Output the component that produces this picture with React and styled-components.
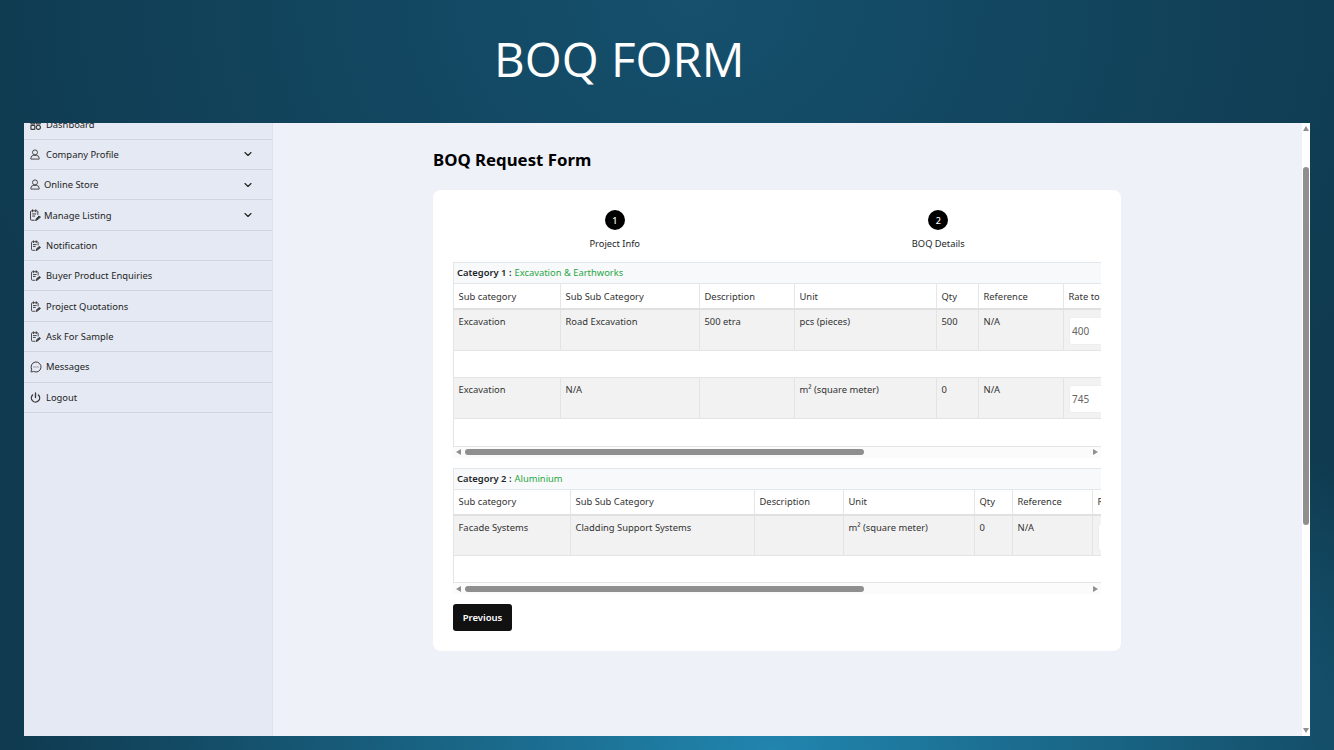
import React from "react"
import styled, { createGlobalStyle } from "styled-components"
import { ChevronDown, MessageCircleMore, Power } from "lucide-react"

const GlobalStyle = createGlobalStyle`
  html, body {
    margin: 0;
    height: 100%;
    overflow: hidden;
  }
  body {
    font-family: "Noto Sans", "Open Sans", sans-serif;
    color: #212529;
  }
  * {
    box-sizing: border-box;
  }
`

const Slide = styled.div`
  width: 1334px;
  height: 750px;
  display: flex;
  flex-direction: column;
  padding: 0 24px 14px;
  background:
    radial-gradient(ellipse 760px 420px at 58% 100%, #2185ae 0%, rgba(33, 133, 174, 0) 100%),
    radial-gradient(ellipse 760px 620px at 52% 0%, #15506d 0%, rgba(21, 80, 109, 0) 100%),
    #0f3a4f;
`

const SlideTitle = styled.h1`
  height: 123px;
  margin: 0;
  padding: 28px 0 0 470px;
  font-family: "Open Sans", sans-serif;
  font-size: 47.5px;
  line-height: 62px;
  font-weight: 400;
  color: #fff;
`

const Window = styled.div`
  flex: 1;
  min-height: 0;
  display: flex;
  background: #eef1f8;
  overflow: hidden;
`

const Sidebar = styled.nav`
  width: 249px;
  flex-shrink: 0;
  background: #e5e9f3;
  border-right: 1px solid #dde2ec;
  overflow: hidden;
`

const MenuList = styled.div`
  margin-top: -13.6px;
`

const MenuRow = styled.div`
  height: 30.35px;
  display: flex;
  align-items: center;
  padding: 0 18.5px 0 6px;
  border-bottom: 1px solid #cfd4de;
  font-size: 9.4px;
  color: #1e1e1e;
`

const MenuIcon = styled.span`
  width: 14px;
  height: 14px;
  display: flex;
  align-items: center;
  flex-shrink: 0;
  color: #3a3a3a;
`

const MenuLabel = styled.span`
  flex: 1;
  margin-left: ${(p) => (p.$tight ? 0 : 2)}px;
`

const SheetSvg = styled.svg`
  margin-left: ${(p) => (p.$big ? 0 : 1)}px;
`

const Main = styled.main`
  flex: 1;
  min-width: 0;
  padding: 25px 0 0 160px;
`

const Heading = styled.h2`
  margin: 0 0 19px;
  font-size: 16.8px;
  line-height: 23px;
  font-weight: 700;
  color: #000;
`

const Card = styled.div`
  width: 688px;
  height: 461px;
  padding: 20px;
  background: #fff;
  border-radius: 8px;
`

const Stepper = styled.div`
  height: 52px;
  display: flex;
`

const Step = styled.div`
  width: 323.5px;
  display: flex;
  flex-direction: column;
  align-items: center;
`

const StepDot = styled.div`
  width: 20px;
  height: 20px;
  border-radius: 50%;
  background: #000;
  color: #fff;
  font-size: 9px;
  font-weight: 500;
  display: flex;
  align-items: center;
  justify-content: center;
`

const StepLabel = styled.div`
  margin-top: 7px;
  font-size: 9.3px;
  line-height: 14px;
  color: #212529;
`

const CategoryBar = styled.div`
  height: 22px;
  display: flex;
  align-items: center;
  padding: 0 0 1px 3px;
  background: #f8f9fa;
  border: 1px solid #e4e7ea;
  border-right: 0;
  font-size: 9.4px;
  font-weight: 600;
  color: #212529;
`

const CategoryName = styled.span`
  margin-left: 3px;
  font-weight: 400;
  color: #28a745;
`

const TableScroll = styled.div`
  width: 648px;
  overflow: hidden;
`

const Table = styled.table`
  table-layout: fixed;
  width: ${(p) => p.$width}px;
  border-collapse: collapse;
  font-size: 9.4px;
  color: #333;
`

const HeadCell = styled.th`
  height: 25px;
  padding: 0 4.5px;
  text-align: left;
  font-weight: 400;
  background: #fff;
  border: 1px solid #e4e6e8;
  border-top: 0;
  border-bottom: 2px solid #dee0e2;
`

const Cell = styled.td`
  height: 41px;
  padding: 5px 4.5px 0;
  vertical-align: top;
  background: #f2f2f2;
  border: 1px solid #e2e4e6;
  border-top: 0;
`

const RateCell = styled(Cell)`
  padding: 7px 0 0 5px;
`

const Spacer = styled.td`
  height: ${(p) => p.$h}px;
  background: #fff;
  border-left: 1px solid #e2e4e6;
  border-bottom: 1px solid #e2e4e6;
`

const RateBox = styled.div`
  width: 76px;
  height: 28px;
  padding-left: 2px;
  display: flex;
  align-items: center;
  background: #fff;
  border: 1px solid #eeeeee;
  border-radius: 3px;
  font-size: 10px;
  color: #666;
`

const HScroll = styled.div`
  width: 648px;
  height: 11px;
  display: flex;
  align-items: center;
  background: #fbfbfb;
  color: #8f8f8f;
  padding: 0 3px;
`

const HThumb = styled.div`
  width: 399px;
  height: 6px;
  margin-left: 4px;
  border-radius: 3px;
  background: #8f8f8f;
`

const Filler = styled.div`
  flex: 1;
`

const TableBlock = styled.section`
  margin-bottom: 10px;
`

const PrevButton = styled.button`
  width: 59px;
  height: 27px;
  padding: 0;
  border: 0;
  border-radius: 3px;
  background: #111;
  color: #fff;
  font-family: inherit;
  font-size: 9.5px;
  font-weight: 600;
`

const VScroll = styled.div`
  width: 8px;
  flex-shrink: 0;
  display: flex;
  flex-direction: column;
  align-items: center;
  background: #fff;
  color: #8f8f8f;
  padding: 3px 0;
`

const VThumb = styled.div`
  width: 6px;
  height: 358px;
  margin-top: 36px;
  border-radius: 3px;
  background: #8f8f8f;
`

function SheetIcon({ big }) {
  return (
    <SheetSvg $big={big} width={big ? 11 : 10} height={big ? 12 : 11} viewBox="3 1 21 22" fill="none" stroke="currentColor" strokeWidth="1.9" strokeLinecap="round" strokeLinejoin="round">
      <path d="M18 11V6a2 2 0 0 0-2-2H6a2 2 0 0 0-2 2v14a2 2 0 0 0 2 2h5" />
      <path d="M8 2v4M14 2v4M8 10h6M8 14h4" />
      <path d="M14 22l1-3 5-5 3 2-6 5z" fill="currentColor" />
    </SheetSvg>
  )
}

function PersonIcon() {
  return (
    <svg width="10" height="11" viewBox="0 0 24 26" fill="none" stroke="currentColor" strokeWidth="2.2" strokeLinejoin="round">
      <circle cx="12" cy="8" r="6" />
      <path d="M9 15h6a7 7 0 0 1 7 7v2H2v-2a7 7 0 0 1 7-7z" />
    </svg>
  )
}

function DashIcon() {
  return (
    <svg width="11" height="11" viewBox="0 0 24 24" fill="none" stroke="currentColor" strokeWidth="2.6">
      <rect x="2" y="2" width="8.5" height="8.5" rx="1.5" />
      <rect x="14" y="2" width="8.5" height="8.5" rx="1.5" />
      <rect x="2" y="14" width="8.5" height="8.5" rx="1.5" />
      <circle cx="18.2" cy="18.2" r="4.6" />
    </svg>
  )
}

function Triangle({ dir }) {
  const points = {
    left: "5,0 5,6 0,3",
    right: "0,0 0,6 5,3",
    up: "0,5 6,5 3,0",
    down: "0,0 6,0 3,5",
  }
  const wide = dir === "up" || dir === "down"
  return (
    <svg width={wide ? 6 : 5} height={wide ? 5 : 6} viewBox={wide ? "0 0 6 5" : "0 0 5 6"} fill="currentColor">
      <polygon points={points[dir]} />
    </svg>
  )
}

const menu = [
  { label: "Dashboard", icon: <DashIcon /> },
  { label: "Company Profile", icon: <PersonIcon />, more: true },
  { label: "Online Store", icon: <PersonIcon />, more: true, tight: true },
  { label: "Manage Listing", icon: <SheetIcon big />, more: true, tight: true },
  { label: "Notification", icon: <SheetIcon /> },
  { label: "Buyer Product Enquiries", icon: <SheetIcon /> },
  { label: "Project Quotations", icon: <SheetIcon /> },
  { label: "Ask For Sample", icon: <SheetIcon /> },
  { label: "Messages", icon: <MessageCircleMore size={12} /> },
  { label: "Logout", icon: <Power size={11} strokeWidth={3} /> },
]

const headers = ["Sub category", "Sub Sub Category", "Description", "Unit", "Qty", "Reference", "Rate to"]

function BoqTable({ name, index, widths, rows }) {
  return (
    <TableBlock>
      <TableScroll>
        <CategoryBar>
          Category {index} : <CategoryName>{name}</CategoryName>
        </CategoryBar>
        <Table $width={widths.reduce((a, b) => a + b, 0)}>
          <colgroup>
            {widths.map((w, i) => (
              <col key={i} style={{ width: w }} />
            ))}
          </colgroup>
          <thead>
            <tr>
              {headers.map((h) => (
                <HeadCell key={h}>{h}</HeadCell>
              ))}
            </tr>
          </thead>
          <tbody>
            {rows.map((row, i) => (
              <React.Fragment key={i}>
                <tr>
                  {row.cells.map((c, j) => (
                    <Cell key={j}>{c}</Cell>
                  ))}
                  <RateCell>
                    <RateBox>{row.rate}</RateBox>
                  </RateCell>
                </tr>
                <tr>
                  <Spacer $h={row.spacer} colSpan={7} />
                </tr>
              </React.Fragment>
            ))}
          </tbody>
        </Table>
      </TableScroll>
      <HScroll>
        <Triangle dir="left" />
        <HThumb />
        <Filler />
        <Triangle dir="right" />
      </HScroll>
    </TableBlock>
  )
}

export default function App() {
  return (
    <>
      <GlobalStyle />
      <Slide>
        <SlideTitle>BOQ FORM</SlideTitle>
        <Window>
          <Sidebar>
            <MenuList>
              {menu.map((item) => (
                <MenuRow key={item.label}>
                  <MenuIcon>{item.icon}</MenuIcon>
                  <MenuLabel $tight={item.tight}>{item.label}</MenuLabel>
                  {item.more && <ChevronDown size={12} strokeWidth={2.2} />}
                </MenuRow>
              ))}
            </MenuList>
          </Sidebar>
          <Main>
            <Heading>BOQ Request Form</Heading>
            <Card>
              <Stepper>
                <Step>
                  <StepDot>1</StepDot>
                  <StepLabel>Project Info</StepLabel>
                </Step>
                <Step>
                  <StepDot>2</StepDot>
                  <StepLabel>BOQ Details</StepLabel>
                </Step>
              </Stepper>
              <BoqTable
                index={1}
                name="Excavation & Earthworks"
                widths={[107, 139, 95, 142, 42, 85, 120]}
                rows={[
                  { cells: ["Excavation", "Road Excavation", "500 etra", "pcs (pieces)", "500", "N/A"], rate: "400", spacer: 27 },
                  { cells: ["Excavation", "N/A", "", "m² (square meter)", "0", "N/A"], rate: "745", spacer: 28 },
                ]}
              />
              <BoqTable
                index={2}
                name="Aluminium"
                widths={[117, 184, 89, 131, 38, 80, 120]}
                rows={[
                  { cells: ["Facade Systems", "Cladding Support Systems", "", "m² (square meter)", "0", "N/A"], rate: "", spacer: 27 },
                ]}
              />
              <PrevButton>Previous</PrevButton>
            </Card>
          </Main>
          <VScroll>
            <Triangle dir="up" />
            <VThumb />
            <Filler />
            <Triangle dir="down" />
          </VScroll>
        </Window>
      </Slide>
    </>
  )
}
